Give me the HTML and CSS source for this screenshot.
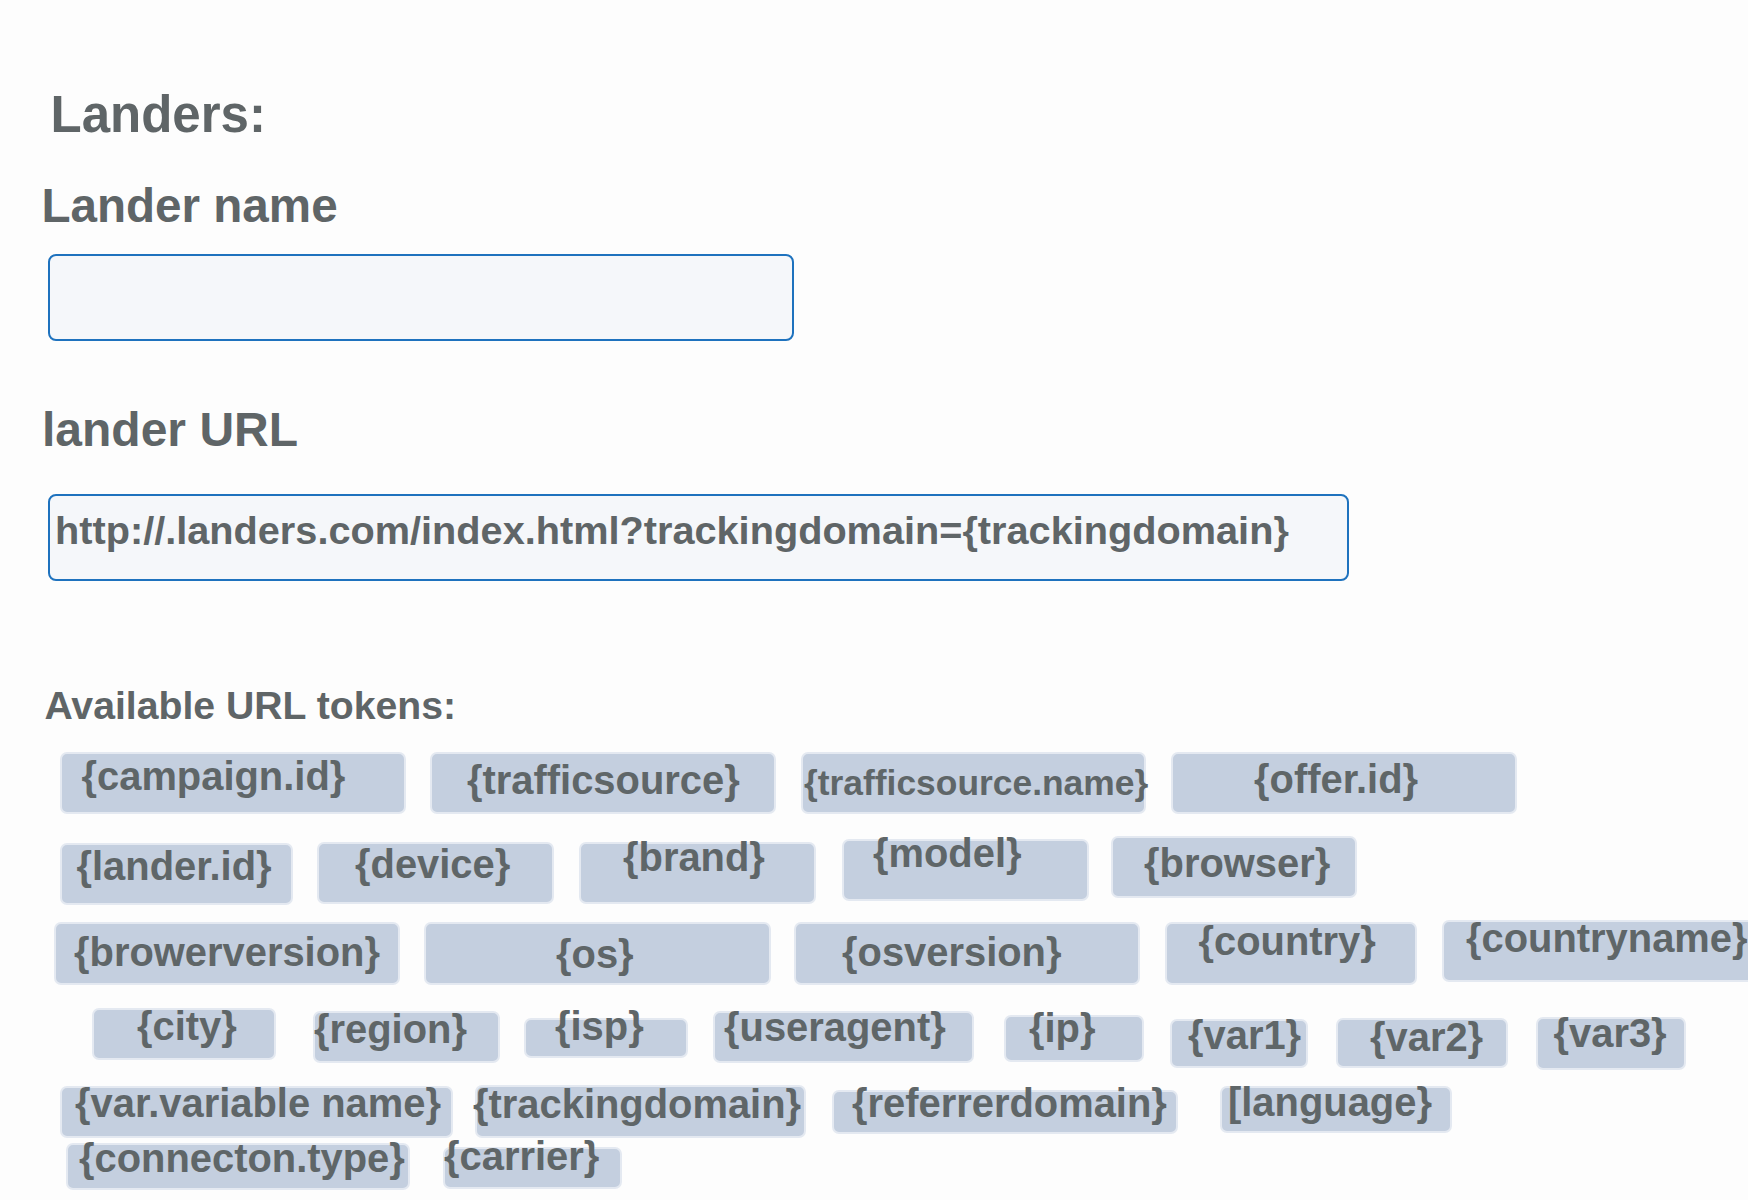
FILE: index.html
```html
<!DOCTYPE html>
<html lang="en">
<head>
<meta charset="utf-8">
<title>Landers</title>
<link rel="stylesheet" href="styles.css">
</head>
<body>
<main class="page">
  <h1 class="title">Landers:</h1>
  <label class="field-label label-name" for="lander-name">Lander name</label>
  <input id="lander-name" class="field field-name" type="text">
  <label class="field-label label-url" for="lander-url">lander URL</label>
  <input id="lander-url" class="field field-url" type="text" value="http://.landers.com/index.html?trackingdomain={trackingdomain}">
  <h2 class="tokens-title">Available URL tokens:</h2>
  <div class="tokens">
    <div class="token-row row-1">
      <span class="chip t-campaign">{campaign.id}</span>
      <span class="chip t-trafficsource">{trafficsource}</span>
      <span class="chip t-tsname">{trafficsource.name}</span>
      <span class="chip t-offer">{offer.id}</span>
    </div>
    <div class="token-row row-2">
      <span class="chip t-lander">{lander.id}</span>
      <span class="chip t-device">{device}</span>
      <span class="chip t-brand">{brand}</span>
      <span class="chip t-model">{model}</span>
      <span class="chip t-browser">{browser}</span>
    </div>
    <div class="token-row row-3">
      <span class="chip t-browerversion">{browerversion}</span>
      <span class="chip t-os">{os}</span>
      <span class="chip t-osversion">{osversion}</span>
      <span class="chip t-country">{country}</span>
      <span class="chip t-countryname">{countryname}</span>
    </div>
    <div class="token-row row-4">
      <span class="chip t-city">{city}</span>
      <span class="chip t-region">{region}</span>
      <span class="chip t-isp">{isp}</span>
      <span class="chip t-useragent">{useragent}</span>
      <span class="chip t-ip">{ip}</span>
      <span class="chip t-var1">{var1}</span>
      <span class="chip t-var2">{var2}</span>
      <span class="chip t-var3">{var3}</span>
    </div>
    <div class="token-row row-5">
      <span class="chip t-varname">{var.variable name}</span>
      <span class="chip t-trackingdomain">{trackingdomain}</span>
      <span class="chip t-referrer">{referrerdomain}</span>
      <span class="chip t-language">[language}</span>
    </div>
    <div class="token-row row-6">
      <span class="chip t-connection">{connecton.type}</span>
      <span class="chip t-carrier">{carrier}</span>
    </div>
  </div>
</main>
</body>
</html>
```
FILE: styles.css
```css
html, body {
  margin: 0;
  padding: 0;
  overflow: hidden;
  background: #fdfdfd;
}

body {
  font-family: "Liberation Sans", Arial, Helvetica, sans-serif;
  color: #5f6567;
}

.page {
  padding: 88.5px 0 0 40px;
}

.title {
  margin: 0 0 0 10.5px;
  font-size: 51px;
  line-height: 51px;
  font-weight: bold;
}

.field-label {
  display: block;
  font-weight: bold;
}

.label-name {
  margin: 42.7px 0 0 1.4px;
  font-size: 47.6px;
  line-height: 47px;
}

.label-url {
  margin: 65.5px 0 0 2px;
  font-size: 48px;
  line-height: 47.5px;
}

.field {
  display: block;
  box-sizing: border-box;
  height: 87px;
  margin-left: 8px;
  padding: 0 6px 13px 5px;
  border: 2px solid #1e72be;
  border-radius: 8px;
  background: #f5f7fa;
  font-family: "Liberation Sans", Arial, sans-serif;
  font-weight: bold;
  font-size: 39.7px;
  color: #5f6567;
  outline: none;
}

.field-name {
  margin-top: 24.8px;
  width: 746px;
}

.field-url {
  margin-top: 40px;
  width: 1301px;
}

.tokens-title {
  margin: 106.2px 0 0 4.5px;
  font-size: 39.2px;
  line-height: 38.7px;
  font-weight: bold;
}

.tokens {
  margin-top: 26.1px;
}

.token-row {
  display: flex;
  align-items: flex-start;
}

.row-2 { margin-top: 22px; }
.row-3 { margin-top: 15px; }
.row-4 { margin-top: 23px; }
.row-5 { margin-top: 15px; }
.row-6 { margin-top: 5px; }

.chip {
  flex: none;
  display: block;
  box-sizing: border-box;
  border: 2px solid #e4e9f1;
  border-radius: 7px;
  background: #c4cfdf;
  font-weight: bold;
  font-size: 39.9px;
  line-height: 12px;
  color: #5f6668;
  white-space: nowrap;
}

/* row 1 */
.t-campaign      { margin-left: 20px; width: 346px; height: 62px; padding-top: 16.3px; text-indent: 19.5px; }
.t-trafficsource { margin-left: 24px; width: 346px; height: 62px; padding-top: 20.3px; text-indent: 35px; }
.t-tsname        { margin-left: 25px; width: 345px; height: 62px; padding-top: 22.7px; text-indent: 1px; font-size: 35.4px; }
.t-offer         { margin-left: 25px; width: 346px; height: 62px; padding-top: 19.3px; text-indent: 81px; }

/* row 2 */
.t-lander  { margin: 7px 0 0 20px; width: 233px; height: 62px; padding-top: 15.3px; text-indent: 14.5px; }
.t-device  { margin: 6px 0 0 24px; width: 237px; height: 62px; padding-top: 14.3px; text-indent: 36px; }
.t-brand   { margin: 6px 0 0 25px; width: 237px; height: 62px; padding-top: 7.3px; text-indent: 42px; }
.t-model   { margin: 3px 0 0 26px; width: 247px; height: 62px; padding-top: 6.3px; text-indent: 29px; }
.t-browser { margin: 0 0 0 22px; width: 246px; height: 62px; padding-top: 19.3px; text-indent: 31px; }

/* row 3 */
.t-browerversion { margin: 2px 0 0 14px; width: 346px; height: 63px; padding-top: 22.3px; text-indent: 18px; }
.t-os            { margin: 2px 0 0 24px; width: 347px; height: 63px; padding-top: 24.3px; text-indent: 130px; }
.t-osversion     { margin: 2px 0 0 23px; width: 346px; height: 63px; padding-top: 22.3px; text-indent: 46px; }
.t-country       { margin: 2px 0 0 25px; width: 252px; height: 63px; padding-top: 11.3px; text-indent: 31.5px; }
.t-countryname   { margin: 0 0 0 25px; width: 330px; height: 62px; padding-top: 10.3px; text-indent: 22px; }

/* row 4 */
.t-city      { margin: 0 0 0 52px; width: 184px; height: 52px; padding-top: 10.3px; text-indent: 43px; }
.t-region    { margin: 3px 0 0 37px; width: 187px; height: 52px; padding-top: 10.3px; text-indent: -1px; }
.t-isp       { margin: 10px 0 0 24px; width: 164px; height: 40px; padding-top: 0.3px; text-indent: 29px; }
.t-useragent { margin: 3px 0 0 25px; width: 261px; height: 52px; padding-top: 8.3px; text-indent: 9px; }
.t-ip        { margin: 7px 0 0 30px; width: 140px; height: 47px; padding-top: 5.3px; text-indent: 23px; }
.t-var1      { margin: 11px 0 0 26px; width: 138px; height: 49px; padding-top: 8.3px; text-indent: 16px; }
.t-var2      { margin: 10px 0 0 28px; width: 172px; height: 50px; padding-top: 11.3px; text-indent: 32px; }
.t-var3      { margin: 9px 0 0 28px; width: 150px; height: 53px; padding-top: 8.3px; text-indent: 15.5px; }

/* row 5 */
.t-varname        { margin: 1px 0 0 20px; width: 393px; height: 52px; padding-top: 9.3px; text-indent: 13px; }
.t-trackingdomain { margin: 0 0 0 22px; width: 331px; height: 53px; padding-top: 11.3px; text-indent: -4px; }
.t-referrer       { margin: 5px 0 0 26px; width: 346px; height: 44px; padding-top: 5.3px; text-indent: 18px; }
.t-language       { margin: 1px 0 0 42px; width: 232px; height: 47px; padding-top: 8.3px; text-indent: 6px; }

/* row 6 */
.t-connection { margin: 0 0 0 26px; width: 344px; height: 47px; padding-top: 7.3px; text-indent: 11px; }
.t-carrier    { margin: 4px 0 0 33px; width: 179px; height: 42px; padding-top: 1.3px; text-indent: -1px; }
```
